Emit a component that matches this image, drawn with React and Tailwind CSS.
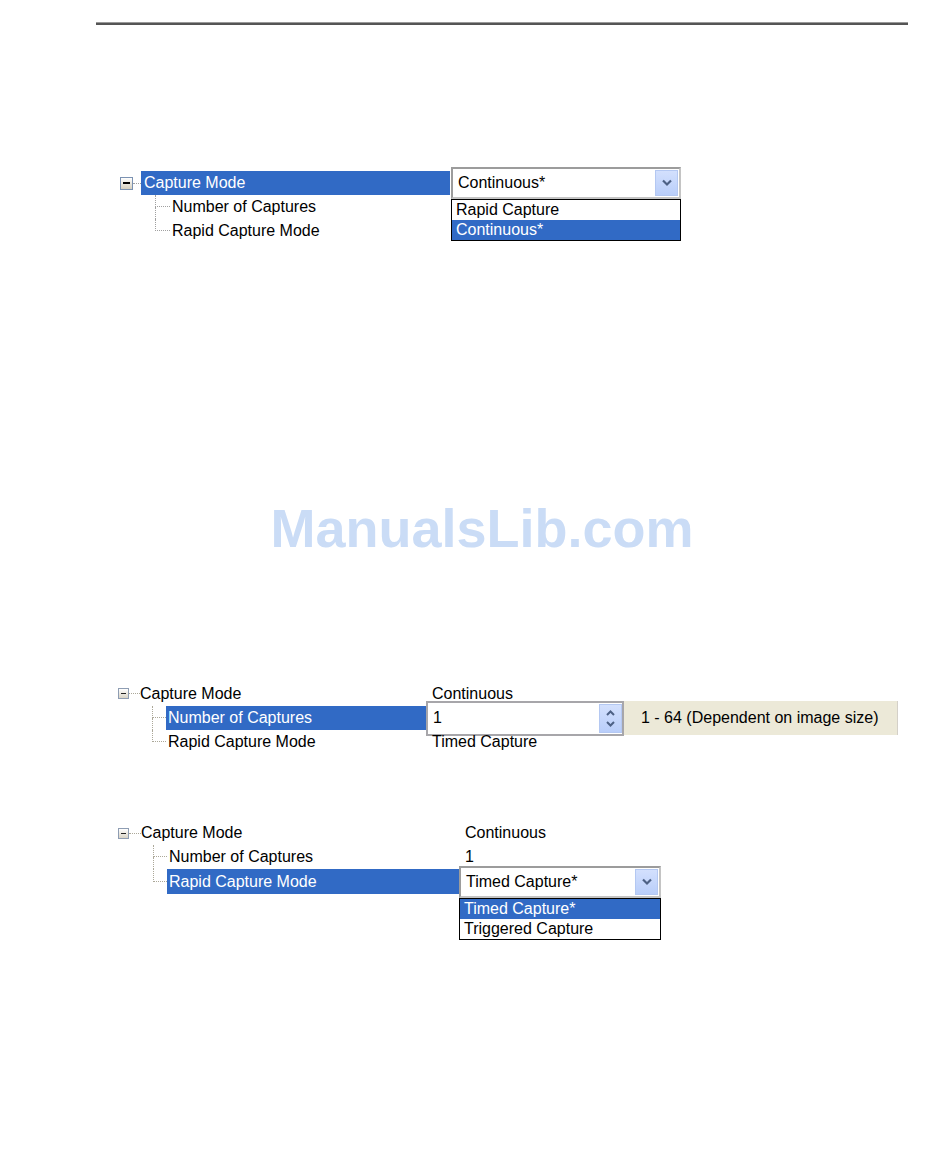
import React from 'react';

function BigToggle() {
    return (
        <div className="w-[13px] h-[13px] shrink-0 border border-[#7b92b2] bg-linear-to-b from-white to-[#d6d0bf] flex items-center justify-center">
            <div className="w-[7px] h-[2px] bg-black" />
        </div>
    );
}

function SmallToggle() {
    return (
        <div className="w-[11px] h-[11px] shrink-0 border border-[#8e9db3] bg-linear-to-b from-white to-[#d9d4c6] flex items-center justify-center">
            <div className="w-[5px] h-[1px] bg-[#222]" />
        </div>
    );
}

// dotted elbow for a child row; the last child stops at the middle
function Branch({ last, width, color }) {
    return (
        <div className={`${width} self-stretch shrink-0 flex flex-col`}>
            <div className={`h-1/2 border-l border-b border-dotted ${color}`} />
            {!last && <div className={`flex-1 border-l border-dotted ${color}`} />}
        </div>
    );
}

function ArrowButton() {
    return (
        <div className="w-[23px] h-[26px] shrink-0 border border-[#b4c8f2] bg-linear-to-b from-[#d3e0fd] to-[#b9cefa] flex items-center justify-center">
            <svg width="10" height="8" viewBox="0 0 10 8">
                <path d="M1 1.5 L5 5.5 L9 1.5" fill="none" stroke="#4d6185" strokeWidth="2.2" />
            </svg>
        </div>
    );
}

function Combo({ width, value, options, selected }) {
    return (
        <div className={`relative ${width} shrink-0`}>
            <div className="h-[32px] border-2 border-t-[#9c9c9c] border-l-[#9c9c9c] border-r-[#c4c4c4] border-b-[#c4c4c4] bg-white flex items-center justify-between pl-[5px] pr-[1px]">
                <span>{value}</span>
                <ArrowButton />
            </div>
            {/* open list */}
            <div className="absolute top-full left-0 w-full border border-black bg-white z-10">
                {options.map((o, i) => (
                    <div
                        key={o}
                        className={
                            i === selected
                                ? 'h-[20px] leading-[20px] pl-[4px] bg-[#316ac5] text-white'
                                : 'h-[20px] leading-[20px] pl-[4px] text-black'
                        }
                    >
                        {o}
                    </div>
                ))}
            </div>
        </div>
    );
}

function App() {
    const tan = 'border-[#aca899]';
    const grey = 'border-[#a0a0a0]';

    return (
        <div className="w-[950px] h-[1167px] bg-white text-black text-[16px] font-['Liberation_Sans',Arial,sans-serif] overflow-hidden">
            {/* page rule */}
            <div className="pt-[22px] pl-[96px]">
                <div className="w-[812px] h-[3px] border-t border-[#9a9a9a] bg-[#555]" />
            </div>

            {/* first screen: capture mode dropdown */}
            <div className="mt-[146px]">
                <div className="flex h-6 items-center">
                    <div className="w-[120px] shrink-0" />
                    <BigToggle />
                    <div className={`w-[8px] border-t border-dotted ${grey}`} />
                    <div className="w-[309px] h-full bg-[#316ac5] text-white pl-[3px] flex items-center">
                        Capture Mode
                    </div>
                    <div className="ml-[1px]">
                        <Combo
                            width="w-[230px]"
                            value="Continuous*"
                            options={['Rapid Capture', 'Continuous*']}
                            selected={1}
                        />
                    </div>
                </div>
                <div className="flex h-6 items-center">
                    <div className="w-[155px] shrink-0" />
                    <Branch width="w-[15px]" color={grey} />
                    <span className="ml-[2px]">Number of Captures</span>
                </div>
                <div className="flex h-6 items-center">
                    <div className="w-[155px] shrink-0" />
                    <Branch last width="w-[15px]" color={grey} />
                    <span className="ml-[2px]">Rapid Capture Mode</span>
                </div>
            </div>

            {/* watermark */}
            <div className="mt-[258px] h-[54px] pl-[14px] text-center text-[54px] leading-none font-bold text-[#cadcf6]">
                ManualsLib.com
            </div>

            {/* second screen: number of captures spinner */}
            <div className="mt-[126px]">
                <div className="flex h-[25px] items-center">
                    <div className="w-[432px] shrink-0 flex items-center h-full">
                        <div className="w-[118px] shrink-0" />
                        <SmallToggle />
                        <div className={`w-[11px] border-t border-dotted ${tan}`} />
                        <span>Capture Mode</span>
                    </div>
                    <span>Continuous</span>
                </div>
                <div className="flex h-6 items-center">
                    <div className="w-[152px] shrink-0" />
                    <Branch width="w-[14px]" color={tan} />
                    <div className="w-[260px] h-full shrink-0 bg-[#316ac5] text-white pl-[2px] flex items-center">
                        Number of Captures
                    </div>
                    <div className="w-[198px] h-[35px] shrink-0 border-2 border-[#a7a6aa] bg-white flex items-center justify-between pl-[5px]">
                        <span>1</span>
                        <div className="w-[23px] h-[29px] border border-[#b4c8f2] bg-linear-to-b from-[#d3e0fd] to-[#b9cefa] flex flex-col items-center justify-center gap-[5px]">
                            <svg width="9" height="6" viewBox="0 0 9 6">
                                <path d="M1 5 L4.5 1.5 L8 5" fill="none" stroke="#4d6185" strokeWidth="2" />
                            </svg>
                            <svg width="9" height="6" viewBox="0 0 9 6">
                                <path d="M1 1 L4.5 4.5 L8 1" fill="none" stroke="#4d6185" strokeWidth="2" />
                            </svg>
                        </div>
                    </div>
                    <div className="w-[274px] h-[34px] shrink-0 bg-[#ece9d8] border-r border-[#d4d0c8] pl-[17px] flex items-center">
                        1 - 64 (Dependent on image size)
                    </div>
                </div>
                <div className="flex h-6 items-center">
                    <div className="w-[432px] shrink-0 flex items-center h-full">
                        <div className="w-[152px] shrink-0" />
                        <Branch last width="w-[14px]" color={tan} />
                        <span className="ml-[2px]">Rapid Capture Mode</span>
                    </div>
                    <span>Timed Capture</span>
                </div>
            </div>

            {/* third screen: rapid capture mode dropdown */}
            <div className="mt-[67px]">
                <div className="flex h-6 items-center">
                    <div className="w-[465px] shrink-0 flex items-center h-full">
                        <div className="w-[118px] shrink-0" />
                        <SmallToggle />
                        <div className={`w-[12px] border-t border-dotted ${tan}`} />
                        <span>Capture Mode</span>
                    </div>
                    <span>Continuous</span>
                </div>
                <div className="flex h-6 items-center">
                    <div className="w-[465px] shrink-0 flex items-center h-full">
                        <div className="w-[153px] shrink-0" />
                        <Branch width="w-[14px]" color={tan} />
                        <span className="ml-[2px]">Number of Captures</span>
                    </div>
                    <span>1</span>
                </div>
                <div className="flex h-[25px] items-center">
                    <div className="w-[153px] shrink-0" />
                    <Branch last width="w-[14px]" color={tan} />
                    <div className="w-[292px] h-full shrink-0 bg-[#316ac5] text-white pl-[2px] flex items-center">
                        Rapid Capture Mode
                    </div>
                    <Combo
                        width="w-[202px]"
                        value="Timed Capture*"
                        options={['Timed Capture*', 'Triggered Capture']}
                        selected={0}
                    />
                </div>
            </div>
        </div>
    );
}

export default App;
